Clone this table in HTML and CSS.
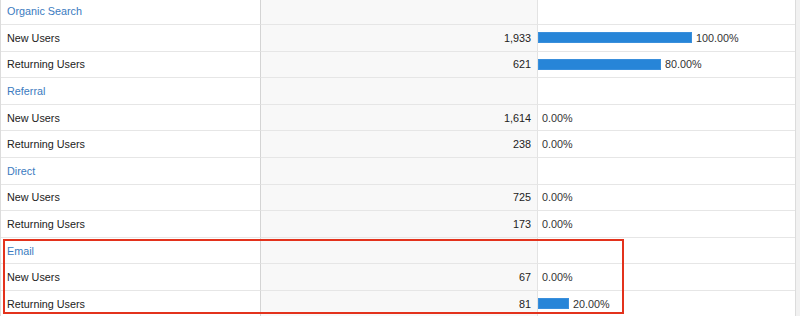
FILE: index.html
```html
<!DOCTYPE html>
<html>
<head>
<meta charset="utf-8">
<link rel="stylesheet" href="styles.css">
</head>
<body>
<div class="page">
  <div class="table">
    <div class="row group-row"><div class="c name link">Organic Search</div><div class="c num"></div><div class="c bar-cell"></div></div>
    <div class="row"><div class="c name">New Users</div><div class="c num">1,933</div><div class="c bar-cell"><span class="bar" style="width:154px"></span><span class="pct">100.00%</span></div></div>
    <div class="row"><div class="c name">Returning Users</div><div class="c num">621</div><div class="c bar-cell"><span class="bar" style="width:123px"></span><span class="pct">80.00%</span></div></div>
    <div class="row group-row"><div class="c name link">Referral</div><div class="c num"></div><div class="c bar-cell"></div></div>
    <div class="row"><div class="c name">New Users</div><div class="c num">1,614</div><div class="c bar-cell"><span class="pct nobar">0.00%</span></div></div>
    <div class="row"><div class="c name">Returning Users</div><div class="c num">238</div><div class="c bar-cell"><span class="pct nobar">0.00%</span></div></div>
    <div class="row group-row"><div class="c name link">Direct</div><div class="c num"></div><div class="c bar-cell"></div></div>
    <div class="row"><div class="c name">New Users</div><div class="c num">725</div><div class="c bar-cell"><span class="pct nobar">0.00%</span></div></div>
    <div class="row"><div class="c name">Returning Users</div><div class="c num">173</div><div class="c bar-cell"><span class="pct nobar">0.00%</span></div></div>
    <div class="highlight-group">
      <div class="row group-row"><div class="c name link">Email</div><div class="c num"></div><div class="c bar-cell"></div></div>
      <div class="row"><div class="c name">New Users</div><div class="c num">67</div><div class="c bar-cell"><span class="pct nobar">0.00%</span></div></div>
      <div class="row"><div class="c name">Returning Users</div><div class="c num">81</div><div class="c bar-cell"><span class="bar" style="width:31px"></span><span class="pct">20.00%</span></div></div>
      <div class="highlight"></div>
    </div>
  </div>
</div>
</body>
</html>
```

FILE: styles.css
```css
html, body {
  margin: 0;
  padding: 0;
  background: #f1f1f1;
  overflow: hidden;
}
.page {
  width: 800px;
  height: 316px;
  overflow: hidden;
}
.table {
  width: 796px;
  box-sizing: border-box;
  margin-top: -1.6px;
  background: #fff;
  border-left: 1px solid #dcdcdc;
  border-right: 1px solid #dcdcdc;
  font-family: "Liberation Sans", Arial, sans-serif;
  font-size: 10.8px;
  color: #222;
}
.row {
  display: grid;
  grid-template-columns: 260px 277px 1fr;
  height: 26.6px;
}
.c {
  box-sizing: border-box;
  border-bottom: 1px solid #e6e6e6;
  display: flex;
  align-items: center;
  white-space: nowrap;
}
.name {
  padding-left: 6px;
  border-right: 1px solid #d4d4d4;
}
.link {
  color: #3b7bc0;
}
.num {
  background: #f8f8f8;
  justify-content: flex-end;
  padding-right: 6px;
  border-right: 1px solid #e3e3e3;
}
.bar-cell {
  padding-left: 0;
}
.bar {
  display: inline-block;
  height: 11px;
  background: #2785d8;
  box-shadow: inset 0 0 0 1px #3a8fdc;
  margin-right: 4px;
}
.pct {
  color: #333;
}
.pct.nobar {
  margin-left: 4px;
}
.highlight-group {
  position: relative;
}
.highlight {
  position: absolute;
  left: 2px;
  top: 1.6px;
  width: 621px;
  height: 75px;
  box-sizing: border-box;
  border: 2.5px solid #e3321c;
  pointer-events: none;
}
```
